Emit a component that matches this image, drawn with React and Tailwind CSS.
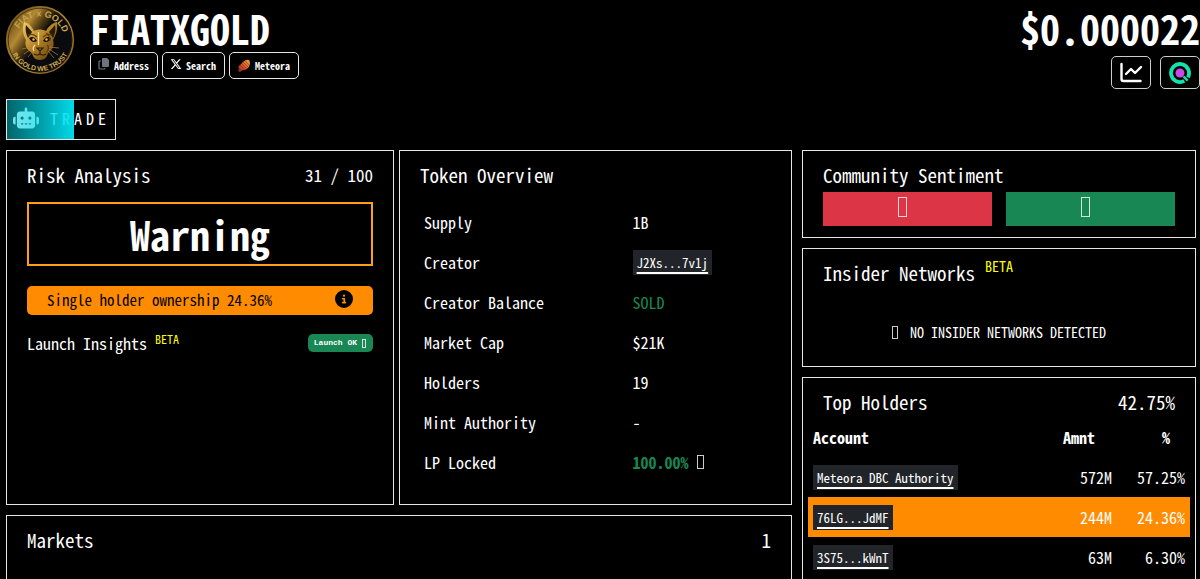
import { FaRobot, FaXTwitter, FaCircleInfo } from "react-icons/fa6";

const overview = [
  { label: "Supply", value: "1B" },
  { label: "Creator", value: <AccountLink>J2Xs...7v1j</AccountLink> },
  { label: "Creator Balance", value: <span className="text-[#198754]">SOLD</span> },
  { label: "Market Cap", value: "$21K" },
  { label: "Holders", value: "19" },
  { label: "Mint Authority", value: "-" },
  {
    label: "LP Locked",
    value: (
      <span className="flex items-center gap-2">
        <b className="text-[#198754]">100.00%</b>
        <Glyph className="h-[14px] w-[7px]" />
      </span>
    ),
  },
];

const holders = [
  { account: "Meteora DBC Authority", amount: "572M", pct: "57.25%" },
  { account: "76LG...JdMF", amount: "244M", pct: "24.36%", flagged: true },
  { account: "3S75...kWnT", amount: "63M", pct: "6.30%" },
];

function Glyph({ className }) {
  return <span aria-hidden="true" className={`inline-block shrink-0 border border-white/80 ${className}`} />;
}

function AccountLink({ children }) {
  return (
    <a
      href="#account"
      className="inline-block bg-[#212529] px-1 text-[13px] leading-[25px] text-white underline decoration-2 underline-offset-4"
    >
      {children}
    </a>
  );
}

function Panel({ className = "", children }) {
  return <section className={`border border-white/90 ${className}`}>{children}</section>;
}

function Title({ children }) {
  return <h2 className="text-[19px] leading-[30px]">{children}</h2>;
}

function Beta({ className }) {
  return <sup className={`text-[#ffff00] ${className}`}>BETA</sup>;
}

function CoinLogo() {
  return (
    <svg viewBox="0 0 70 70" className="size-[70px] shrink-0" role="img" aria-label="Fiat x Gold">
      <defs>
        <linearGradient id="coin" x1="0" y1="0.1" x2="1" y2="0.8">
          <stop offset="0" stopColor="#3a2a08" />
          <stop offset="0.14" stopColor="#7d5c1c" />
          <stop offset="0.28" stopColor="#b48a34" />
          <stop offset="0.4" stopColor="#5a4213" />
          <stop offset="0.52" stopColor="#0a0b0e" />
          <stop offset="1" stopColor="#0a0b0e" />
        </linearGradient>
        <linearGradient id="rim" x1="0" y1="0" x2="1" y2="1">
          <stop offset="0" stopColor="#6b4e17" />
          <stop offset="0.5" stopColor="#b08a3a" />
          <stop offset="1" stopColor="#7c5b1d" />
        </linearGradient>
        <linearGradient id="cat" x1="0" y1="0" x2="1" y2="1">
          <stop offset="0" stopColor="#f0cd6c" />
          <stop offset="0.5" stopColor="#b47f22" />
          <stop offset="1" stopColor="#4a300a" />
        </linearGradient>
        <path id="arcTop" d="M10.500 36a24.500 24.500 0 0 1 49 0" />
        <path id="arcBottom" d="M4 35a31 31 0 0 0 62 0" />
      </defs>
      <circle cx="35" cy="35" r="33.300" fill="url(#coin)" stroke="url(#rim)" strokeWidth="1.600" />
      <circle cx="35" cy="35" r="31.800" fill="none" stroke="#2b1f0a" strokeWidth="0.700" />
      <text fontSize="9" fontWeight="700" fill="#c9a44d" textAnchor="middle" fontFamily="Liberation Sans, sans-serif">
        <textPath href="#arcTop" startOffset="53%">FIAT x GOLD</textPath>
      </text>
      <text fontSize="7" fontWeight="700" fill="#d0a850" textAnchor="middle" fontFamily="Liberation Sans, sans-serif">
        <textPath href="#arcBottom" startOffset="50%">IN GOLD WE TRUST</textPath>
      </text>
      <path
        d="M19 17c5 1 8 5 10 9 3-2 8-2 12 0 2-4 6-8 11-9 1 7-1 13-4 18 2 6-1 10-5 13-1 4-3 7-8 7s-7-3-8-7c-5-3-8-8-6-13-3-5-4-11-2-18Z"
        fill="url(#cat)"
      />
      <path d="m21 20 6 7-4 6c-2-4-3-8-2-13ZM50 20l-6 7 4 6c2-4 3-8 2-13Z" fill="#2a1b08" />
      <path d="M24 33q5-3 8 3-5 3-8-3ZM46 33q-5-3-8 3 5 3 8-3Z" fill="#171007" />
      <circle cx="28.500" cy="34.500" r="1.200" fill="#d8b661" />
      <circle cx="41.500" cy="34.500" r="1.200" fill="#d8b661" />
      <path d="M23 30q5-2 9 2M47 30q-5-2-9 2" fill="none" stroke="#5b3c0c" strokeWidth="1.200" />
      <path d="M32 43h6l-3 3zM35 46v3q-3 2-6 0m6 0q3 2 6 0" fill="none" stroke="#2b1c06" strokeWidth="1.200" />
      <path d="M33.500 27v13M30 40q-3 3-1 6" fill="none" stroke="#f8e3a0" strokeWidth="1.200" />
      <path d="M41 28q4 2 4 8M42 40q3 2 0 7" fill="none" stroke="#5b3c0c" strokeWidth="1.200" />
      <path
        d="M26 42 17 44M26 44l-7 5M28 46l-5 6M44 42l10 1M44 44l9 6M43 46l6 7"
        stroke="#a98643"
        strokeWidth="0.700"
      />
    </svg>
  );
}

function CopyIcon() {
  return (
    <svg viewBox="0 0 12 14" className="mb-1 h-[14px] w-3 shrink-0" fill="none">
      <path d="M5 1h4l2 2v6q0 1-1 1H5q-1 0-1-1V2q0-1 1-1Z" fill="#6c757d" />
      <path d="M3 4H2q-1 0-1 1v6q0 1 1 1h4q1 0 1-1" stroke="#6c757d" strokeWidth="1.200" />
    </svg>
  );
}

function MeteoraIcon() {
  return (
    <svg viewBox="0 0 14 14" className="size-[14px] shrink-0" fill="none">
      <defs>
        <linearGradient id="meteor" x1="1" y1="0" x2="0" y2="1">
          <stop offset="0" stopColor="#f5a03a" />
          <stop offset="0.5" stopColor="#d9582a" />
          <stop offset="1" stopColor="#8f2320" />
        </linearGradient>
      </defs>
      <path d="M1 8 6 3q3-3 6-2 2 3 0 7-3 4-6 3l-3 2-2-1 1-3Z" fill="url(#meteor)" />
      <path
        d="M2 5 10 13M3 3l9 9M5 2l8 8M7 1l7 7M0 7l8 8M0 9l6 6"
        stroke="#000"
        strokeOpacity="0.45"
        strokeWidth="0.500"
      />
    </svg>
  );
}

function ChartIcon() {
  return (
    <svg viewBox="0 0 24 22" className="h-[22px] w-6" fill="none" stroke="#fff" strokeWidth="2.400" strokeLinecap="round">
      <path d="M2.500 2v15q0 2 2 2h17" />
      <path d="m7 12 5-5 4 4 6-6" strokeLinejoin="round" />
    </svg>
  );
}

function RingIcon() {
  return (
    <svg viewBox="0 0 24 24" className="size-6" fill="none">
      <path d="M16.300 19.900a9 9 0 1 1 3.600-3.600" stroke="#12e2ab" strokeWidth="3.800" />
      <path d="m15.500 15.500 4.200 4.200" stroke="#12e2ab" strokeWidth="2.400" />
      <circle cx="12" cy="12" r="4.500" fill="#c74be3" />
    </svg>
  );
}

function LinkButton({ icon, children }) {
  return (
    <a
      href="#link"
      className="flex h-[27px] items-center gap-1 rounded-[5px] border border-white/90 pr-2 pl-[7px] text-[10px] font-bold"
    >
      {icon}
      {children}
    </a>
  );
}

function Header() {
  return (
    <header className="flex justify-between pt-[5px] pl-[5px]">
      <div className="flex gap-[15px]">
        <CoinLogo />
        <div className="pt-[1px]">
          <h1 className="text-[40px] leading-[44px] font-bold">FIATXGOLD</h1>
          <nav className="mt-[2px] flex gap-1">
            <LinkButton icon={<CopyIcon />}>Address</LinkButton>
            <LinkButton icon={<FaXTwitter className="mb-1 size-3" />}>Search</LinkButton>
            <LinkButton icon={<MeteoraIcon />}>Meteora</LinkButton>
          </nav>
        </div>
      </div>
      <div className="flex flex-col items-end pt-[1px]">
        <p className="text-[40px] leading-[44px] font-bold">$0.000022</p>
        <div className="mt-[6px] flex gap-[9px]">
          <button aria-label="Chart" className="flex h-[33px] w-10 items-center justify-center rounded-[5px] border border-white/80">
            <ChartIcon />
          </button>
          <button aria-label="Explorer" className="flex h-[33px] w-10 items-center justify-center rounded-[5px] border border-white/80">
            <RingIcon />
          </button>
        </div>
      </div>
    </header>
  );
}

export default function App() {
  return (
    <div className="h-screen overflow-hidden bg-black font-['Noto_Sans_Mono_CJK_JP','Liberation_Mono',monospace] text-base text-white">
      <Header />

      <div className="mt-[10px] px-[6px]">
        <button className="relative flex h-[41px] w-[110px] items-center border border-white/90 pb-1 pl-[6px]">
          <FaRobot className="size-[26px]" />
          <span className="ml-[11px] tracking-[4px]">TRADE</span>
          <span className="absolute inset-y-0 left-0 w-[67px] bg-linear-to-r from-[#00c8d480] to-[#00e5f5f2]" />
        </button>
      </div>

      <main className="mt-[10px] grid grid-cols-[786fr_394fr] gap-[10px] pr-1 pl-[6px]">
        <div className="flex flex-col gap-[10px]">
          <div className="grid grid-cols-[388fr_393fr] gap-[5px]">
            <Panel className="px-5 pt-[9px]">
              <div className="flex items-center justify-between">
                <Title>Risk Analysis</Title>
                <span className="text-[17px]">31 / 100</span>
              </div>
              <div className="mt-3 border-2 border-[#ff9f1a] text-center text-[40px] leading-[60px] font-bold">
                Warning
              </div>
              <div className="mt-5 flex h-[29px] items-center justify-between rounded-[5px] bg-[#ff8c00] px-5 text-[15px] text-black">
                Single holder ownership 24.36%
                <FaCircleInfo className="mb-1 size-[18px]" />
              </div>
              <div className="mt-4 flex items-center justify-between">
                <h3 className="leading-6">
                  Launch Insights <Beta className="text-xs" />
                </h3>
                <span className="flex h-[18px] items-center gap-1 rounded-[5px] bg-[#198754] px-[6px] font-['Liberation_Mono',monospace] text-[8px] font-bold">
                  Launch OK <Glyph className="mx-px h-[9px] w-1" />
                </span>
              </div>
            </Panel>

            <Panel className="px-5 pt-[9px] pb-[22px]">
              <Title>Token Overview</Title>
              <table className="mt-3 w-full table-fixed">
                <tbody>
                  {overview.map((row) => (
                    <tr key={row.label} className="h-10">
                      <th scope="row" className="w-[60%] pl-1 text-left font-normal">
                        {row.label}
                      </th>
                      <td className="pl-[2px]">{row.value}</td>
                    </tr>
                  ))}
                </tbody>
              </table>
            </Panel>
          </div>

          <Panel className="flex h-40 justify-between px-5 pt-[9px]">
            <Title>Markets</Title>
            <span className="text-[19px] leading-[30px]">1</span>
          </Panel>
        </div>

        <aside className="flex flex-col gap-[10px]">
          <Panel className="px-5 pt-[9px] pb-[11px]">
            <Title>Community Sentiment</Title>
            <div className="mt-[2px] grid grid-cols-2 gap-[14px]">
              <button aria-label="Bearish" className="flex h-[34px] items-center justify-center bg-[#dc3545] pr-[11px]">
                <Glyph className="mb-1 h-5 w-[9px]" />
              </button>
              <button aria-label="Bullish" className="flex h-[34px] items-center justify-center bg-[#198754] pr-[11px]">
                <Glyph className="mb-1 h-5 w-[9px]" />
              </button>
            </div>
          </Panel>

          <Panel className="px-5 pt-[9px] pb-[22px]">
            <div className="flex gap-[10px]">
              <Title>Insider Networks</Title>
              <Beta className="top-0 text-sm leading-4" />
            </div>
            <p className="mt-8 flex items-center justify-center gap-3 text-sm leading-6">
              <Glyph className="h-[13px] w-[6px]" />
              NO INSIDER NETWORKS DETECTED
            </p>
          </Panel>

          <Panel className="h-80 pt-[9px]">
            <div className="flex justify-between px-5">
              <Title>Top Holders</Title>
              <span className="text-[19px] leading-[30px]">42.75%</span>
            </div>
            <div className="px-[5px]">
              <table className="w-full">
                <thead>
                  <tr className="h-10">
                    <th className="pl-[5px] text-left">Account</th>
                    <th className="w-[70px] pr-[22px] text-right">Amnt</th>
                    <th className="w-[73px] pr-5 text-right">%</th>
                  </tr>
                </thead>
                <tbody>
                  {holders.map((h) => (
                    <tr key={h.account} className={h.flagged ? "h-10 bg-[#ff8c00]" : "h-10"}>
                      <td className="pl-[5px]">
                        <AccountLink>{h.account}</AccountLink>
                      </td>
                      <td className="pr-[5px] text-right">{h.amount}</td>
                      <td className="pr-[5px] text-right">{h.pct}</td>
                    </tr>
                  ))}
                </tbody>
              </table>
            </div>
          </Panel>
        </aside>
      </main>
    </div>
  );
}
